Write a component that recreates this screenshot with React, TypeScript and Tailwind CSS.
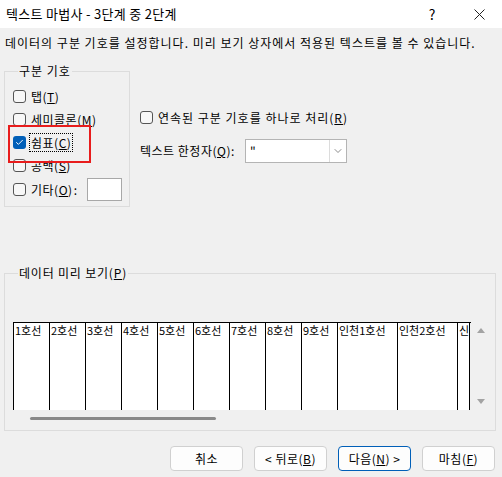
import { Check, ChevronDown } from 'lucide-react';

const font = { fontFamily: '"Noto Sans CJK KR", "Noto Sans", sans-serif' };

function Box({ checked }: { checked?: boolean }) {
  return checked ? (
    <span className="flex h-[13px] w-[13px] shrink-0 items-center justify-center rounded-[3px] bg-[#005fb8]">
      <Check className="h-[9px] w-[9px] text-white" strokeWidth={2.5} />
    </span>
  ) : (
    <span className="h-[13px] w-[13px] shrink-0 rounded-[3px] border border-[#555] bg-[#f7f7f7]" />
  );
}

function Option({ label, hot, checked, focus }: { label: string; hot: string; checked?: boolean; focus?: boolean }) {
  return (
    <div className="flex items-center gap-[4px]">
      <Box checked={checked} />
      <span className={`px-[1px] leading-[17px] ${focus ? 'outline outline-1 outline-dotted outline-black' : ''}`}>
        {label}(<u>{hot}</u>)
      </span>
    </div>
  );
}

const columns = [
  { t: '1호선', w: 36 },
  { t: '2호선', w: 36 },
  { t: '3호선', w: 36 },
  { t: '4호선', w: 36 },
  { t: '5호선', w: 36 },
  { t: '6호선', w: 36 },
  { t: '7호선', w: 36 },
  { t: '8호선', w: 36 },
  { t: '9호선', w: 36 },
  { t: '인천1호선', w: 60 },
  { t: '인천2호선', w: 60 },
  { t: '신', w: 13 },
];

export default function App() {
  return (
    <div className="h-[477px] w-[502px] overflow-hidden bg-[#f0f0f0] text-[12px] tracking-[0.5px] text-black" style={font}>
      {/* 제목 표시줄 */}
      <div className="flex h-[28px] items-center bg-white pl-[6px]">
        <span className="flex-1 text-[13px] tracking-[0.3px]">텍스트 마법사 - 3단계 중 2단계</span>
        <span className="mr-[38px] text-[14px]">?</span>
        <svg width="11" height="11" viewBox="0 0 11 11" className="mr-[17px]">
          <path d="M0.5 0.5 L10.5 10.5 M10.5 0.5 L0.5 10.5" stroke="#222" strokeWidth="1" />
        </svg>
      </div>

      <p className="mt-[7px] pl-[5px] leading-[16px] tracking-[1px]">
        데이터의 구분 기호를 설정합니다. 미리 보기 상자에서 적용된 텍스트를 볼 수 있습니다.
      </p>

      <div className="mt-[12px] flex">
        {/* 구분 기호 */}
        <fieldset className="ml-[4px] w-[126px] border border-[#dcdcdc] pb-[4px] pl-[8px] pt-[6px]">
          <legend className="ml-[5px] px-[1px] leading-[16px] tracking-[1px]">구분 기호</legend>
          <div className="flex h-[23px] items-center">
            <Option label="탭" hot="T" />
          </div>
          <div className="flex h-[23px] items-center">
            <Option label="세미콜론" hot="M" />
          </div>
          <div className="relative flex h-[23px] items-center">
            <Option label="쉼표" hot="C" checked focus />
            <div className="absolute left-[-5px] top-[-6px] h-[38px] w-[83px] border-2 border-[#e81c1c]" />
          </div>
          <div className="flex h-[23px] items-center">
            <Option label="공백" hot="S" />
          </div>
          <div className="flex h-[25px] items-center">
            <Option label="기타" hot="O" />
            <span>:</span>
            <span className="ml-[10px] h-[23px] w-[35px] border border-[#a8a8a8] bg-white" />
          </div>
        </fieldset>

        <div className="ml-[10px] mt-[43px] flex flex-col">
          <div className="flex h-[22px] items-center tracking-[1px]">
            <Option label="연속된 구분 기호를 하나로 처리" hot="R" />
          </div>
          <div className="mt-[11px] flex h-[24px] items-center">
            <span className="w-[105px]">
              텍스트 한정자(<u>Q</u>):
            </span>
            <div className="flex h-[24px] w-[102px] items-center border border-[#b4b4b4] bg-white">
              <span className="flex-1 pl-[4px]">"</span>
              <span className="flex h-full w-[17px] items-center justify-center border-l border-[#dcdcdc]">
                <ChevronDown className="h-[12px] w-[12px] text-[#666]" strokeWidth={1.5} />
              </span>
            </div>
          </div>
        </div>
      </div>

      {/* 데이터 미리 보기 */}
      <fieldset className="ml-[4px] mt-[58px] h-[166px] w-[492px] border border-[#dcdcdc] pl-[8px]">
        <legend className="ml-[5px] px-[1px] leading-[16px] tracking-[0.8px]">
          데이터 미리 보기(<u>P</u>)
        </legend>
        <div className="mt-[41px] flex">
          <div className="w-[458px]">
            <div className="flex h-[88px] border-t border-black">
              {columns.map((c, i) => (
                <div
                  key={c.t}
                  className={`h-full shrink-0 overflow-hidden whitespace-nowrap border-l border-black bg-white pl-[1px] text-[11px] leading-[14px] tracking-normal ${
                    i === columns.length - 1 ? 'border-r' : ''
                  }`}
                  style={{ width: c.w }}
                >
                  {c.t}
                </div>
              ))}
            </div>
            <div className="flex h-[16px] items-center pl-[17px]">
              <div className="h-[3px] w-[186px] rounded-full bg-[#8a8a8a]" />
            </div>
          </div>
          <div className="flex h-[88px] w-[20px] flex-col items-center justify-between py-[6px]">
            <svg width="8" height="5" viewBox="0 0 8 5">
              <path d="M4 0 L8 5 L0 5 Z" fill="#a3a3a3" />
            </svg>
            <svg width="8" height="5" viewBox="0 0 8 5">
              <path d="M0 0 L8 0 L4 5 Z" fill="#a3a3a3" />
            </svg>
          </div>
        </div>
      </fieldset>

      <div className="mt-[15px] flex justify-end gap-[11px] pr-[7px]">
        {[
          { t: <>취소</>, primary: false },
          { t: <>&lt; 뒤로(<u>B</u>)</>, primary: false },
          { t: <>다음(<u>N</u>) &gt;</>, primary: true },
          { t: <>마침(<u>F</u>)</>, primary: false },
        ].map((b, i) => (
          <button
            key={i}
            className={`flex h-[25px] w-[73px] items-center justify-center rounded-[4px] border bg-[#fdfdfd] ${
              b.primary ? 'border-[#005fb8]' : 'border-[#d0d0d0]'
            }`}
          >
            {b.t}
          </button>
        ))}
      </div>
    </div>
  );
}
